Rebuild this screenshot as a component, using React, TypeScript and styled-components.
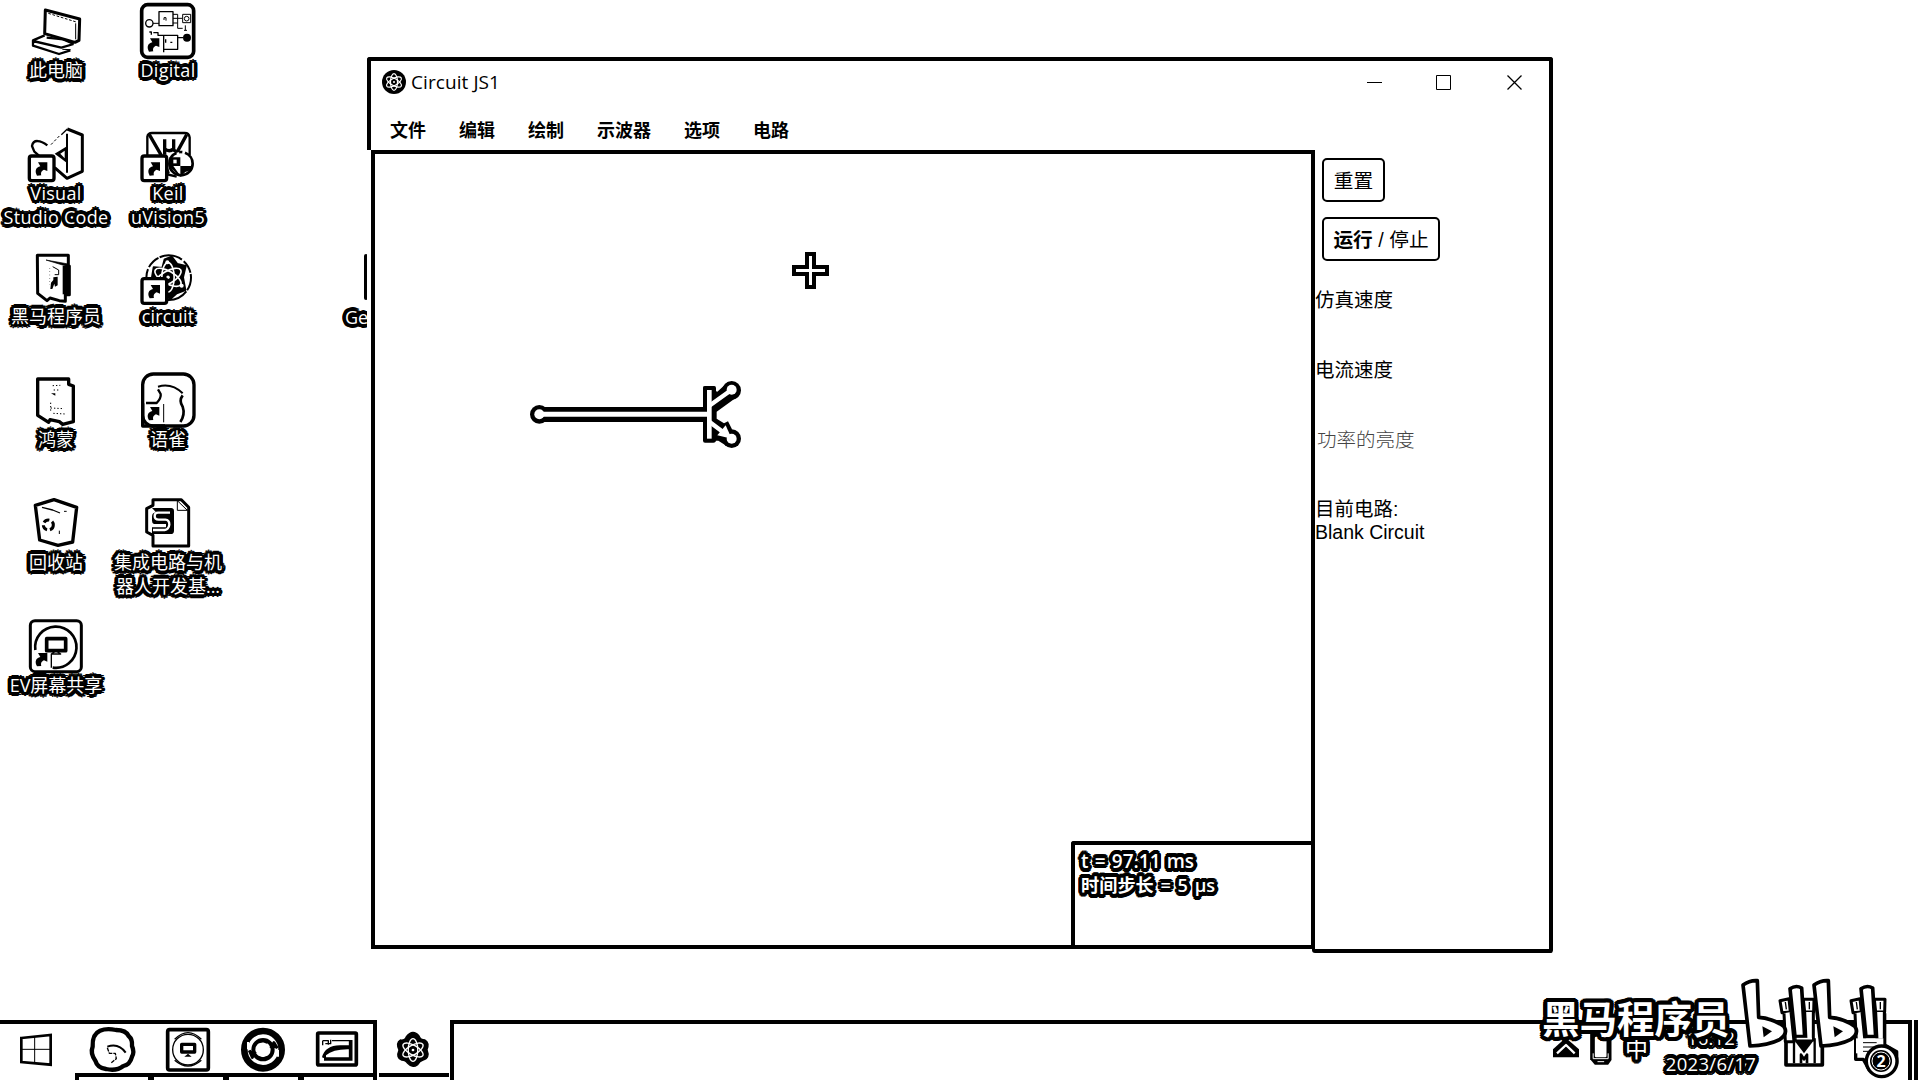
import React from "react";
import styled, { createGlobalStyle, css } from "styled-components";

const ring = (r: number) =>
  [r, r / 2]
    .flatMap((d) =>
      Array.from({ length: 16 }, (_, i) => {
        const a = (i * Math.PI) / 8;
        return `${(Math.cos(a) * d).toFixed(2)}px ${(Math.sin(a) * d).toFixed(2)}px 0 #000`;
      })
    )
    .join(",");

const outlined = (r: number) => css`
  color: #fff;
  text-shadow: ${ring(r)};
`;

const Global = createGlobalStyle`
  body { margin: 0; background: #fff; overflow: hidden; }
  * { box-sizing: border-box; }
  svg { display: block; overflow: visible; fill: none; stroke: #000; stroke-linejoin: round; }
`;

const ui = `"Open Sans", "Noto Sans CJK SC", sans-serif`;

const Desktop = styled.main`
  position: relative;
  width: 1920px;
  height: 1080px;
  overflow: hidden;
  background: #fff;
  color: #000;
  font-family: ${ui};
  display: flex;
  flex-direction: column;
  justify-content: space-between;
`;

const IconGrid = styled.section`
  display: grid;
  grid-template-columns: 112px 112px;
  grid-auto-flow: column;
  grid-template-rows: repeat(6, 123px);
`;

const Shortcut = styled.div`
  display: flex;
  flex-direction: column;
  align-items: center;
`;

const Label = styled.span<{ $spacing?: number }>`
  ${outlined(3.7)}
  font-size: 18px;
  line-height: 24px;
  margin-top: -1px;
  letter-spacing: ${(p) => p.$spacing ?? 0}px;
  text-align: center;
  white-space: pre;
`;

const HiddenShortcut = styled.div`
  position: absolute;
  left: 341px;
  top: 254px;
  width: 28px;
  height: 75px;
  padding-left: 3px;
  overflow: hidden;
  display: flex;
  flex-direction: column;
  justify-content: space-between;
`;

const HiddenEdge = styled.i`
  width: 4px;
  height: 46px;
  margin-left: 20px;
  border-radius: 2px;
  background: #000;
`;

const Window = styled.section`
  position: absolute;
  left: 367px;
  top: 57px;
  width: 1186px;
  height: 896px;
  display: flex;
  flex-direction: column;
  background: #fff;
  border-radius: 3px;
`;

const WindowHead = styled.header`
  height: 93px;
  border: 4px solid #000;
  border-bottom: 0;
  border-radius: 3px 3px 0 0;
  display: flex;
  flex-direction: column;
`;

const TitleBar = styled.div`
  height: 42px;
  padding-left: 11px;
  display: flex;
  align-items: center;
  gap: 5px;
`;

const Title = styled.span`
  flex: 1;
  font-size: 19px;
  letter-spacing: 0.08px;
  line-height: 24px;
`;

const Controls = styled.div`
  display: grid;
  grid-template-columns: 69px 71px 15px;
  padding-right: 27px;
`;

const MenuBar = styled.nav`
  display: flex;
  gap: 33px;
  padding: 14px 0 0 19px;
  font-size: 18px;
  line-height: 26px;
  font-weight: 600;
`;

const WindowBody = styled.div`
  flex: 1;
  display: flex;
  padding-left: 4px;
`;

const Canvas = styled.div`
  width: 944px;
  height: 799px;
  border: 4px solid #000;
  display: flex;
  align-items: flex-end;
  justify-content: flex-end;
  position: relative;
`;

const Cursor = styled.svg`
  position: absolute;
  left: 417px;
  top: 98px;
`;

const Transistor = styled.svg`
  position: absolute;
  left: 125px;
  top: 206px;
`;

const Status = styled.div`
  width: 240px;
  height: 104px;
  border: solid #000;
  border-width: 4px 0 0 4px;
  border-radius: 3px 0 0 0;
  padding: 4px 0 0 6px;
  display: flex;
  flex-direction: column;
`;

const StatusLine = styled.span<{ $size: number; $gap: number }>`
  ${outlined(3.8)}
  font-size: ${(p) => p.$size}px;
  line-height: 24px;
  font-weight: 600;
  word-spacing: ${(p) => p.$gap}px;
  white-space: pre;
`;

const SidePanel = styled.aside`
  flex: 1;
  margin-left: -3px;
  border: solid #000;
  border-width: 0 4px 4px 0;
  border-radius: 0 0 3px 3px;
  padding: 8px 0 0 3px;
  display: flex;
  flex-direction: column;
  align-items: flex-start;
  font-family: "Liberation Sans", "Noto Sans CJK SC", sans-serif;
`;

const PanelButton = styled.button<{ $w: number }>`
  width: ${(p) => p.$w}px;
  height: 44px;
  margin: 0 0 15px 7px;
  padding: 1px 0 0;
  border: 2px solid #000;
  border-radius: 5px;
  background: #fff;
  color: #000;
  font: 400 19.7px/24px "Liberation Sans", "Noto Sans CJK SC", sans-serif;
  white-space: pre;
`;

const PanelInfo = styled.div`
  padding-top: 12px;
  display: flex;
  flex-direction: column;
`;

const PanelLabel = styled.div<{ $faint?: boolean }>`
  height: 24px;
  margin-bottom: 46px;
  padding-left: ${(p) => (p.$faint ? 2 : 0)}px;
  font-size: 19.5px;
  line-height: 24px;
  font-weight: ${(p) => (p.$faint ? 300 : 400)};
  color: ${(p) => (p.$faint ? "#444" : "#000")};
`;

const PanelStack = styled.div`
  display: flex;
  flex-direction: column;
  font-size: 19.5px;
  line-height: 23px;
`;

const Taskbar = styled.footer`
  height: 60px;
  display: flex;
`;

const TaskGroup = styled.div`
  width: 377px;
  border: solid #000;
  border-width: 4px 4px 0 0;
  display: flex;
  gap: 6px;
`;

const StartButton = styled.div`
  width: 73px;
  flex: none;
  padding: 10px 0 0 20px;
`;

const Task = styled.div<{ $flat?: boolean }>`
  width: ${(p) => (p.$flat ? 73 : 69)}px;
  flex: none;
  height: 100%;
  display: flex;
  flex-direction: column;
  justify-content: space-between;
  align-items: center;
  &::after {
    content: "";
    width: ${(p) => (p.$flat ? 70 : 69)}px;
    height: 7px;
    flex: none;
    border: solid #000;
    border-width: ${(p) => (p.$flat ? "4px 0 0" : "4px 4px 0")};
  }
`;

const TaskRest = styled.div`
  flex: 1;
  border: solid #000;
  border-width: 4px 4px 0 4px;
`;

const ShowDesktop = styled.div`
  width: 6px;
  margin-left: 2px;
  border-left: 4px solid #000;
`;

const Tray = styled.div`
  position: absolute;
  left: 1551px;
  top: 1025px;
  display: flex;
  align-items: flex-start;
`;

const TrayGlyphs = styled.div`
  display: flex;
  padding-top: 2px;
`;

const Ime = styled.span`
  ${outlined(4)}
  font-size: 23px;
  line-height: 30px;
  margin: 8px 0 0 7px;
`;

const Clock = styled.div`
  display: flex;
  flex-direction: column;
  align-items: center;
  width: 100px;
  margin-left: 13px;
  font-size: 18.5px;
  line-height: 26px;
`;

const ClockLine = styled.span<{ $spacing: number }>`
  ${outlined(4)}
  letter-spacing: ${(p) => p.$spacing}px;
`;

const Watermark = styled.div`
  position: absolute;
  left: 1542px;
  top: 995px;
  ${outlined(4.2)}
  font: 700 37.5px/44px "Noto Sans CJK SC", sans-serif;
  white-space: nowrap;
`;

const TrayArt = styled.svg`
  position: absolute;
  left: 1720px;
  top: 970px;
`;

const Art = ({ box, w, h, children }: { box: string; w: number; h: number; children: React.ReactNode }) => (
  <svg width={w} height={h} viewBox={box}>
    {children}
  </svg>
);

const Tile = ({ x, y, children }: { x: number; y: number; children: React.ReactNode }) => (
  <Art box={`${x} ${y} 168 177`} w={56} h={59}>
    {children}
  </Art>
);

const Arrow = ({ x, y, boxed = true }: { x: number; y: number; boxed?: boolean }) => (
  <g transform={`translate(${x} ${y})`}>
    {boxed && <rect width="74" height="74" rx="7" fill="#fff" strokeWidth="10" />}
    <path d="M23 59 C15 44 20 34 33 31 L26 19 L54 19 L54 45 L44 41 C35 45 34 52 36 58Z" fill="#000" stroke="none" />
  </g>
);

const Atom = ({ cx, cy, s, w = 5 }: { cx: number; cy: number; s: number; w?: number }) => (
  <g transform={`translate(${cx} ${cy})`} stroke="#fff" strokeWidth={w}>
    {[30, 90, 150].map((r) => (
      <ellipse key={r} rx={s} ry={s * 0.42} transform={`rotate(${r})`} />
    ))}
    <circle r={s * 0.12} fill="#fff" stroke="none" />
  </g>
);

const Computer = () => (
  <Tile x={84} y={0}>
    <path d="M136 30 L239 57 L237 121 L225 127 L134 101Z" strokeWidth="9" />
    <path d="M145 40 L229 66" strokeWidth="3" strokeDasharray="8 5" />
    <path d="M227 70 V118" strokeWidth="3" />
    <path d="M134 106 L99 121 V137 L177 162 L211 151 M99 123 L184 143 L221 132 M140 113 L190 118 L221 132" strokeWidth="7" />
    <path d="M187 148 L212 149" strokeWidth="3" />
  </Tile>
);

const Code = () => (
  <Tile x={84} y={369}>
    <path d="M202 387 L247 405 V514 L201 535 L164 503" strokeWidth="9" />
    <path d="M202 387 L184 404" strokeWidth="4" />
    <path d="M178 408 L150 437" strokeWidth="3" strokeDasharray="8 6" />
    <path d="M142 436 C122 421 100 416 96 438 L103 455 L117 467" strokeWidth="7" />
    <path d="M201 401 V518" strokeWidth="6" />
    <path d="M164 461 L202 438 V490Z" fill="#000" stroke="none" />
    <path d="M181 461 L194 452 V475Z" fill="#fff" stroke="none" />
    <Arrow x={88} y={468} />
  </Tile>
);

const Folder = () => (
  <Tile x={84} y={18}>
    <path d="M112 46 H205 V78 H208 V164 H196 V184 L178 182 L150 174 L141 182 L113 160Z" strokeWidth="9" />
    <path d="M188 78 H210 V163 H188Z" fill="#000" stroke="none" />
    <path d="M138 60 L205 72 L204 80Z" fill="#000" strokeWidth="2" />
    <path d="M158 80 L176 90 V104 H164" strokeWidth="3" />
    <path d="M149 84 V135" strokeWidth="2" strokeDasharray="2 8" />
    <path d="M153 128 L160 120 V112 L173 110 V136 L165 140 L163 131 L157 147 H151Z" fill="#000" stroke="none" />
  </Tile>
);

const Files = () => (
  <Tile x={84} y={387}>
    <path d="M113 417 H206 V433 L220 438 V545 L188 553 L178 545 L150 539 L146 547 L113 526Z" strokeWidth="10" />
    <path d="M158 437 L181 436 M161 450 H178 M152 504 L192 506 M160 520 L196 522 M152 488 V514" strokeWidth="3" strokeDasharray="4 6" />
    <path d="M153 460 H166 V467 Z" fill="#000" stroke="none" />
  </Tile>
);

const Bin = () => (
  <Tile x={84} y={36}>
    <path d="M106 76 L162 59 L230 82 L218 186 L174 196 L119 180Z" strokeWidth="10" />
    <path d="M126 82 L158 90 L180 99" strokeWidth="4" />
    <path d="M192 94 H200 M178 152 V162" strokeWidth="3" />
    <circle cx="145" cy="135" r="15" strokeWidth="9" strokeDasharray="18 9" />
  </Tile>
);

const EvShare = () => (
  <Tile x={84} y={405}>
    <rect x="91" y="422" width="153" height="153" rx="14" strokeWidth="9" />
    <path d="M106 510 A62 62 0 1 1 158 563" strokeWidth="8" />
    <rect x="140" y="476" width="57" height="36" strokeWidth="11" />
    <path d="M154 563 V522 H182 L168 512 L154 522" strokeWidth="4" />
    <Arrow x={88} y={500} boxed={false} />
  </Tile>
);

const Digital = () => (
  <Tile x={420} y={0}>
    <rect x="425" y="14" width="156" height="158" rx="18" strokeWidth="11" />
    <rect x="477" y="35" width="42" height="42" strokeWidth="4" />
    <circle cx="448" cy="70" r="11" strokeWidth="4" />
    <path d="M459 70 H477 M519 43 H533 V85 H548 M519 55 H547 M519 69 H533 M556 76 V91 M552 91 H561 M492 60 V53 H498 V62" strokeWidth="3" />
    <rect x="548" y="43" width="24" height="25" strokeWidth="3" />
    <circle cx="560" cy="56" r="7" strokeWidth="3" />
    <path d="M448 96 H454 V104 M460 98 H474 V106 H533 V148 H491 M491 106 V157 M533 113 H550 M511 127 H517 M497 118 V128" strokeWidth="4" />
    <circle cx="561" cy="113" r="12" fill="#000" stroke="none" />
    <Arrow x={424} y={96} boxed={false} />
  </Tile>
);

const Keil = () => (
  <Tile x={420} y={369}>
    <path d="M442 466 V410 Q444 399 456 399 H554 Q567 399 569 412 V466" strokeWidth="7" />
    <path d="M448 404 L484 466 M560 404 L526 466" strokeWidth="10" />
    <path d="M494 418 V464 M494 446 Q508 458 521 446 M521 418 V450 L528 454" strokeWidth="10" />
    <circle cx="543" cy="491" r="35" fill="#fff" strokeWidth="8" strokeDasharray="150 8 10 8" />
    <path d="M508 472 H541 V498 H520 L541 527 V498 H574 V510 L556 516 L541 530 L508 500Z" fill="#000" stroke="none" />
    <rect x="520" y="479" width="10" height="11" fill="#fff" stroke="none" />
    <path d="M498 522 L530 530 M494 480 L506 520" strokeWidth="7" />
    <Arrow x={426} y={468} />
  </Tile>
);

const CircuitIcon = () => (
  <Tile x={420} y={18}>
    <circle cx="506" cy="113" r="67" strokeWidth="6" strokeDasharray="40 4 70 7" />
    <path d="M455 118 L461 82 L487 84 L494 58 L515 50 L532 72 L557 78 L549 112 L556 150 L530 160 L510 178 L494 160Z" fill="#000" strokeWidth="6" />
    <Atom cx={504} cy={112} s={44} />
    <g fill="#fff" stroke="none">
      <circle cx="502" cy="67" r="6" />
      <circle cx="545" cy="137" r="6" />
    </g>
    <Arrow x={426} y={116} />
  </Tile>
);

const Yuque = () => (
  <Tile x={420} y={387}>
    <rect x="428" y="402" width="154" height="156" rx="32" strokeWidth="10" />
    <path d="M438 489 H470 Q484 474 482 462 L474 448" strokeWidth="7" />
    <path d="M474 440 Q515 428 548 460" strokeWidth="6" />
    <path d="M548 466 Q536 482 548 500 Q556 524 541 546" strokeWidth="8" />
    <path d="M491 492 V547" strokeWidth="3" />
    <path d="M428 490 V558 H495" strokeWidth="10" />
    <Arrow x={424} y={482} boxed={false} />
  </Tile>
);

const Wps = () => (
  <Tile x={420} y={36}>
    <path d="M459 76 V59 H544 L566 82 V198 H459 V166 L440 156 V86Z" strokeWidth="9" />
    <path d="M532 62 V91 H562 Z" strokeWidth="3" />
    <path d="M456 84 H514 Q522 84 522 94 V152 Q522 162 512 162 H456 V142 H498 V132 H462 Q456 130 456 122 V110 Q456 98 468 97Z" fill="#000" stroke="none" />
    <path d="M510 98 H474 Q464 98 464 108 Q464 119 476 119 H496 Q508 120 508 134 Q506 149 494 150 H459" stroke="#fff" strokeWidth="7" />
  </Tile>
);

const shortcuts: { icon: React.ReactNode; text: string; spacing?: number }[] = [
  { icon: <Computer />, text: "此电脑" },
  { icon: <Code />, text: "Visual\nStudio Code", spacing: 0.3 },
  { icon: <Folder />, text: "黑马程序员" },
  { icon: <Files />, text: "鸿蒙" },
  { icon: <Bin />, text: "回收站" },
  { icon: <EvShare />, text: "EV屏幕共享" },
  { icon: <Digital />, text: "Digital", spacing: 0.3 },
  { icon: <Keil />, text: "Keil\nuVision5", spacing: 0.3 },
  { icon: <CircuitIcon />, text: "circuit", spacing: 0.2 },
  { icon: <Yuque />, text: "语雀" },
  { icon: <Wps />, text: "集成电路与机\n器人开发基..." },
];

const BiliB = ({ dx }: { dx: number }) => (
  <g transform={`translate(${dx} 0)`}>
    <path d="M69 45 Q90 30 112 32 L116 142 Q160 145 192 170 Q205 190 180 208 Q145 226 90 228Z" fill="#fff" strokeWidth="11" />
    <path d="M127 169 L156 184 L131 202Z" fill="#000" stroke="none" />
  </g>
);

const BiliI = ({ dx }: { dx: number }) => (
  <g transform={`translate(${dx} 0)`}>
    <path d="M180 92 L207 86 L211 126 L186 128Z M250 88 L282 88 L281 126 L254 126Z" fill="#fff" strokeWidth="9" />
    <path d="M192 130 L196 215 H222 L213 126 M254 126 L258 210 H280 V126" fill="#fff" strokeWidth="9" />
    <path d="M210 56 Q228 44 245 54 L254 200 H225Z" fill="#fff" strokeWidth="11" />
    <path d="M196 96 L199 118 M268 96 V118" strokeWidth="4" />
  </g>
);

export default function App() {
  return (
    <Desktop>
      <Global />
      <IconGrid>
        {shortcuts.map((s) => (
          <Shortcut key={s.text}>
            {s.icon}
            <Label $spacing={s.spacing}>{s.text}</Label>
          </Shortcut>
        ))}
      </IconGrid>
      <HiddenShortcut>
        <HiddenEdge />
        <Label>Ge</Label>
      </HiddenShortcut>

      <Window>
        <WindowHead>
          <TitleBar>
            <Art box="0 0 72 72" w={24} h={24}>
              <circle cx="36" cy="36" r="36" fill="#000" stroke="none" />
              <Atom cx={36} cy={36} s={25} w={3.5} />
            </Art>
            <Title>Circuit JS1</Title>
            <Controls>
              <Art box="0 0 15 15" w={15} h={15}>
                <path d="M0 7.5H15" />
              </Art>
              <Art box="0 0 15 15" w={15} h={15}>
                <rect x=".5" y=".5" width="14" height="14" />
              </Art>
              <Art box="0 0 15 15" w={15} h={15}>
                <path d="M.5 .5L14.5 14.5M14.5 .5L.5 14.5" strokeWidth="1.3" />
              </Art>
            </Controls>
          </TitleBar>
          <MenuBar>
            {["文件", "编辑", "绘制", "示波器", "选项", "电路"].map((m) => (
              <span key={m}>{m}</span>
            ))}
          </MenuBar>
        </WindowHead>
        <WindowBody>
          <Canvas>
            <Cursor width="37" height="37" viewBox="0 0 37 37">
              <path d="M15 2H22V15H35V22H22V35H15V22H2V15H15Z" strokeWidth="4" strokeLinejoin="miter" />
            </Cursor>
            <Transistor width="270" height="110" viewBox="0 0 810 330">
              <g fill="#000" stroke="none">
                <path d="M609 82 Q609 78 615 78 H643 Q648 78 648 84 V240 Q648 248 640 248 H615 Q609 248 609 242Z" />
                <path d="M130 141 H615 V186 H130Z" />
                <circle cx="118" cy="163" r="28" />
                <circle cx="695" cy="91" r="28" />
                <circle cx="695" cy="236" r="28" />
                <path d="M640 90 L652 95 L684 66 L710 112 L650 155 V176 L672 190 L684 184 L696 208 L680 258 L655 242 H640Z" />
              </g>
              <g stroke="#fff">
                <path d="M120 163 H628" strokeWidth="15" />
                <path d="M628 90 V236" strokeWidth="14" />
                <path d="M628 137 L695 89 M628 185 L670 217" strokeWidth="13" />
              </g>
              <g fill="#fff" stroke="none">
                <circle cx="118" cy="163" r="15" />
                <circle cx="695" cy="89" r="15" />
                <circle cx="695" cy="236" r="15" />
                <path d="M677 196 L695 236 L652 226Z" />
              </g>
            </Transistor>
            <Status>
              <StatusLine $size={19} $gap={1.3}>t = 97.11 ms</StatusLine>
              <StatusLine $size={18.2} $gap={2}>时间步长 = 5 µs</StatusLine>
            </Status>
          </Canvas>
          <SidePanel>
            <PanelButton $w={63}>重置</PanelButton>
            <PanelButton $w={118}>
              <b>运行</b> / 停止
            </PanelButton>
            <PanelInfo>
              <PanelLabel>仿真速度</PanelLabel>
              <PanelLabel>电流速度</PanelLabel>
              <PanelLabel $faint>功率的亮度</PanelLabel>
              <PanelStack>
                <span>目前电路:</span>
                <span>Blank Circuit</span>
              </PanelStack>
            </PanelInfo>
          </SidePanel>
        </WindowBody>
      </Window>

      <Taskbar>
        <TaskGroup>
          <StartButton>
            <Art box="60 102 96 96" w={32} h={32}>
              <path d="M64 114 L152 105 V194 L64 186Z" strokeWidth="8" strokeLinejoin="miter" />
              <path d="M104 108 V190 M64 148 H152" strokeWidth="3" />
            </Art>
          </StartButton>
          <Task>
            <Art box="237 72 207 147" w={69} h={49}>
              <path d="M300 92 Q320 84 348 90 Q378 90 386 108 Q398 118 396 138 Q404 156 396 170 Q390 194 370 198 Q350 214 318 207 Q292 204 286 182 Q270 160 278 140 Q276 102 300 92Z" strokeWidth="13" />
              <path d="M322 140 Q356 128 377 158" strokeWidth="6" />
              <path d="M322 143 L328 160 H346 L349 176 L334 188" strokeWidth="4" strokeDasharray="12 3" />
            </Art>
          </Task>
          <Task>
            <Art box="462 72 207 147" w={69} h={49}>
              <rect x="503" y="89" width="122" height="121" rx="6" strokeWidth="11" />
              <circle cx="564" cy="149" r="46" strokeWidth="4" />
              <path d="M524 118 Q564 78 604 118 M524 181 Q564 216 604 181" strokeWidth="4" />
              <rect x="545" y="133" width="39" height="23" strokeWidth="10" />
              <path d="M553 170 L564 161 L575 170Z" fill="#000" stroke="none" />
            </Art>
          </Task>
          <Task>
            <Art box="687 72 207 147" w={69} h={49}>
              <circle cx="789" cy="149" r="56" strokeWidth="20" />
              <circle cx="789" cy="149" r="29" strokeWidth="12" />
              <path d="M748 151 L757 172 L766 155 M812 144 L822 128 L832 145" fill="#000" strokeWidth="9" />
              <path d="M744 126 V148 M834 150 V170" stroke="#fff" strokeWidth="6" />
              <path d="M776 125 L789 122 L802 127 M775 172 L789 177 L802 172" strokeWidth="9" />
            </Art>
          </Task>
          <Task>
            <Art box="912 72 207 147" w={69} h={49}>
              <rect x="953" y="99" width="116" height="96" rx="3" strokeWidth="11" />
              <path d="M1052 120 V177 H972" strokeWidth="11" strokeLinejoin="miter" />
              <path d="M966 172 Q975 137 1020 136 H1052 L1052 148 Q1000 146 978 166 V177Z" fill="#000" stroke="none" />
              <path d="M968 122 H985 V134 M968 122 V136 M992 119 V131 H976 M996 122 H1050" strokeWidth="4" />
            </Art>
          </Task>
        </TaskGroup>
        <Task $flat>
          <Art box="1130 60 219 159" w={73} h={53}>
            <path d="M1200 120 Q1214 122 1218 110 Q1238 86 1256 108 Q1260 120 1274 120 Q1288 128 1280 149 Q1290 174 1268 180 Q1258 182 1252 194 Q1236 206 1222 190 Q1216 180 1204 180 Q1186 174 1196 150 Q1186 128 1200 120Z" fill="#000" strokeWidth="4" />
            <Atom cx={1238} cy={150} s={34} w={4} />
          </Art>
        </Task>
        <TaskRest />
        <ShowDesktop />
      </Taskbar>

      <Tray>
        <TrayGlyphs>
          <Art box="94 171 90 96" w={30} h={32}>
            <path d="M138 203 L178 238 V262 H100 V238Z" fill="#000" stroke="none" />
            <path d="M112 250 L139 225 L165 250" stroke="#fff" strokeWidth="7" />
          </Art>
          <Art box="187 171 110 114" w={37} h={38}>
            <path d="M214 185 H278 V270 L268 284 H228 L214 268Z" fill="#000" stroke="none" />
            <rect x="228" y="200" width="35" height="62" rx="4" fill="#fff" stroke="none" />
            <path d="M223 250 V266 H268 V250 M236 275 H256" stroke="#fff" strokeWidth="3" />
          </Art>
        </TrayGlyphs>
        <Ime>中</Ime>
        <Clock>
          <ClockLine $spacing={0.2}>16:12</ClockLine>
          <ClockLine $spacing={0.3}>2023/6/17</ClockLine>
        </Clock>
      </Tray>
      <Watermark>黑马程序员</Watermark>
      <TrayArt width="200" height="110" viewBox="0 0 600 330">
        <path d="M198 170 V285 H307 V170" fill="#fff" strokeWidth="11" />
        <path d="M222 205 V280 M284 205 V280" strokeWidth="7" />
        <path d="M407 150 V268 H430 L448 300 H500 L530 280 V245 L494 225 V130" fill="#fff" strokeWidth="10" />
        <BiliI dx={0} />
        <BiliI dx={213} />
        <BiliB dx={0} />
        <BiliB dx={213} />
        <path d="M218 205 H286 L252 250Z" fill="#000" stroke="none" />
        <path d="M230 206 H276" stroke="#fff" strokeWidth="5" />
        <path d="M243 280 V254 L252 268 L261 254 V280" strokeWidth="8" />
        <path d="M408 205 H490 V250 H408Z" fill="#fff" stroke="none" />
        <path d="M429 218 H470 M429 231 H470 M429 244 H456" strokeWidth="3" />
        <circle cx="485" cy="274" r="46" fill="#fff" strokeWidth="10" />
        <circle cx="483" cy="273" r="33" fill="#000" stroke="none" />
        <circle cx="483" cy="273" r="27" fill="#000" stroke="#fff" strokeWidth="3" />
        <text x="483" y="290" textAnchor="middle" fill="#fff" stroke="none" fontFamily="Open Sans, sans-serif" fontWeight="700" fontSize="48">
          2
        </text>
      </TrayArt>
    </Desktop>
  );
}
